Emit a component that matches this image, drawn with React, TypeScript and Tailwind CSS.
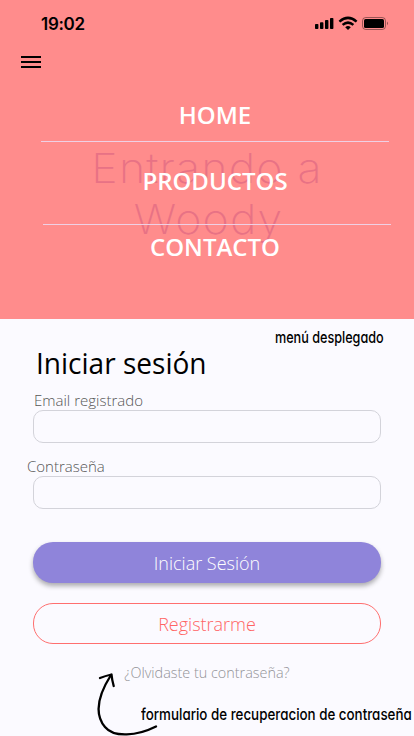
import React from 'react';

function StatusIcons() {
  return (
    <svg width="76" height="16" viewBox="0 0 76 16" className="block">
      <rect x="1" y="9" width="3.4" height="5" rx="0.8" />
      <rect x="6" y="7.2" width="3.4" height="6.8" rx="0.8" />
      <rect x="11" y="5" width="3.4" height="9" rx="0.8" />
      <rect x="16" y="3" width="3.4" height="11" rx="0.8" />
      <g fill="none" stroke="#000" strokeWidth="2.5">
        <path d="M25.4 6.6 Q34 -0.9 42.6 6.6" />
        <path d="M28.6 9.9 Q34 5.3 39.4 9.9" />
      </g>
      <path d="M31.2 12.2 Q34 10 36.8 12.2 L34 15 Z" />
      <rect x="48.5" y="2.5" width="23" height="12" rx="3.3" fill="none" stroke="#000" strokeOpacity="0.4" />
      <rect x="50" y="4" width="20" height="9" rx="1.6" />
      <path d="M73 6.5 Q75 8.3 73 10.3 Z" fillOpacity="0.45" />
    </svg>
  );
}

function MenuIcon() {
  return (
    <button aria-label="Menú" className="mt-[21px] ml-[21px] flex w-5 flex-col gap-[3px]">
      <span className="h-0.5 bg-black" />
      <span className="h-0.5 bg-black" />
      <span className="h-0.5 bg-black" />
    </button>
  );
}

function Header() {
  return (
    <header className="relative h-[319px] bg-[#ff8c8c]">
      <h1 className="absolute inset-x-0 top-[143px] scale-x-[1.09] text-center font-['Inter',sans-serif] text-[41px] leading-[51px] font-extralight text-[#e87285]">
        <span className="block tracking-[1.1px]">Entrando a</span>
        <span className="block pl-[3px] tracking-[1.1px]">Woody</span>
      </h1>
      <div className="flex h-[35px] items-start justify-between pt-[15px] pr-[24px] pl-[41px]">
        <span className="font-['Inter',sans-serif] text-[17px] leading-[18px] font-semibold tracking-[-0.3px]">19:02</span>
        <StatusIcons />
      </div>
      <MenuIcon />
      <nav className="relative mt-[31px] flex flex-col text-center text-[24px] leading-8 font-semibold text-white">
        <a className="ml-4">HOME</a>
        <hr className="mt-[10px] ml-[41px] w-[348px] border-[#efd0e4]" />
        <a className="mt-[23px] ml-4">PRODUCTOS</a>
        <hr className="mt-[27px] ml-[43px] w-[348px] border-[#efd0e4]" />
        <a className="mt-[6px] ml-4">CONTACTO</a>
      </nav>
    </header>
  );
}

function LoginForm() {
  return (
    <section className="flex flex-col px-[33px]">
      <h2 className="ml-[3px] origin-left scale-x-[0.967] text-[29px] leading-[38px]">Iniciar sesión</h2>
      <label className="mt-[8px] ml-[1px] text-[15px] leading-5 font-light text-[#555]">Email registrado</label>
      <input className="h-[33px] w-[348px] rounded-[10px] border border-[#d3d3da]" />
      <label className="mt-[14px] -ml-[6px] text-[15px] leading-[19px] font-light text-[#555]">Contraseña</label>
      <input className="h-[33px] w-[348px] rounded-[10px] border border-[#d3d3da]" />
      <button className="mt-[33px] h-[41px] w-[348px] rounded-[20px] bg-[#8f84da] pt-[2px] text-[18px] font-light text-white shadow-[0_3px_5px_rgba(0,0,0,0.32)]">
        Iniciar Sesión
      </button>
      <button className="mt-5 h-[41px] w-[348px] rounded-[20px] border border-[#ff6f6f] pt-[2px] text-[18px] font-light text-[#ff6464]">
        Registrarme
      </button>
      <a className="mt-[17px] scale-x-[0.96] text-center text-[15px] leading-[22px] font-light text-[#929297]">¿Olvidaste tu contraseña?</a>
    </section>
  );
}

export default function App() {
  return (
    <main className="relative h-[736px] w-[414px] overflow-hidden bg-[#fbfaff] font-['Open_Sans',sans-serif] text-black">
      <Header />
      <div className="flex h-[25px] justify-end pt-[6px] pr-[30px] font-['Inter',sans-serif]">
        <span className="origin-right scale-x-[0.79] text-[16px] leading-6 font-medium whitespace-nowrap [font-feature-settings:'cv11','ss03']">menú desplegado</span>
      </div>
      <LoginForm />
      <svg className="absolute top-[670px] left-[94px]" width="66" height="66" viewBox="0 0 66 66" fill="none" stroke="#000" strokeWidth="2.3" strokeLinecap="round" strokeLinejoin="round">
        <path d="M17 5 C3 27 1 45 11 57 C20 68 43 66 62 56.5" />
        <path d="M6 8 Q11 6 17.5 4.5 Q18 10 19.7 16" />
      </svg>
      <span className="absolute top-[702px] left-[141px] origin-left scale-x-[0.835] font-['Inter',sans-serif] text-[16px] leading-6 font-medium whitespace-nowrap [font-feature-settings:'cv11','ss03']">
        formulario de recuperacion de contraseña
      </span>
    </main>
  );
}
